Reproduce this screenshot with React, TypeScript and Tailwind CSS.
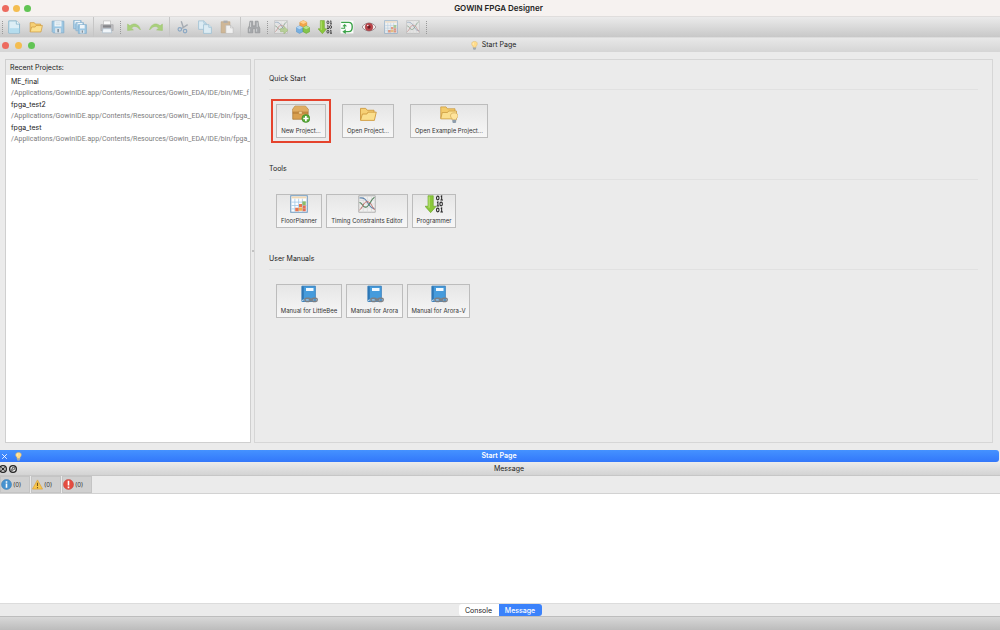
import { useState, type ReactNode } from "react";
import clsx from "clsx";

type IconProps = { className?: string };

function Svg({ className = "size-[14px]", children }: IconProps & { children: ReactNode }) {
  return (
    <svg viewBox="0 0 24 24" className={clsx("shrink-0", className)} fill="none" aria-hidden="true">
      {children}
    </svg>
  );
}

function NewFileIcon() {
  return (
    <Svg>
      <path d="M3 1.5h13l5.5 5.5v15.5H3z" fill="#dceef6" stroke="#86b5cc" strokeWidth="1.6" />
      <path d="M4 14h17v8H4z" fill="#b4dcee" />
      <path d="M16 1.5V7h5.5" fill="#f4fbfe" stroke="#86b5cc" strokeWidth="1.4" />
    </Svg>
  );
}

function FolderIcon({ className }: IconProps) {
  return (
    <Svg className={className}>
      <path d="M2 20V4.5h7l2 2.5h9v4" fill="#f6d075" stroke="#cf9a3d" strokeWidth="1.2" strokeLinejoin="round" />
      <path d="M2 20.5L4.5 12h6l1.5-2.5h11L20.5 20.5z" fill="#fbdf8d" stroke="#cf9a3d" strokeWidth="1.2" strokeLinejoin="round" />
    </Svg>
  );
}

function SaveIcon() {
  return (
    <Svg>
      <path d="M2 2h20v20H4l-2-2z" fill="#9cc7e3" stroke="#84aecb" strokeWidth="1.4" />
      <path d="M6 2h12v9H6z" fill="#eff5f9" />
      <path d="M8 5h8M8 8h8" stroke="#c3d2dc" strokeWidth="1.2" />
      <path d="M7 14h10v8H7z" fill="#dbe3e9" />
      <path d="M11 15.5h2.5V21H11z" fill="#7a8995" />
    </Svg>
  );
}

function SaveAllIcon() {
  return (
    <Svg>
      <g stroke="#84aecb" strokeWidth="1.2">
        <path d="M1 1h13v14H1z" fill="#a9cfe8" />
        <path d="M3 1.5h9v5H3z" fill="#eff5f9" stroke="none" />
        <path d="M5 4.5h13v14H5z" fill="#a9cfe8" />
        <path d="M8 5h8v5H8z" fill="#eff5f9" stroke="none" />
        <path d="M9 8h14v15H9z" fill="#9cc7e3" />
      </g>
      <path d="M12 8.5h8v6h-8z" fill="#eff5f9" />
      <path d="M12.5 17.5h7V23h-7z" fill="#dbe3e9" />
      <path d="M15 18h2v4h-2z" fill="#7a8995" />
    </Svg>
  );
}

function PrinterIcon() {
  return (
    <Svg>
      <path d="M6 1.5h12V9H6z" fill="#fafafa" stroke="#b3b3b3" />
      <path d="M1.5 8h21v10h-21z" fill="#bebec1" stroke="#a3a3a6" />
      <path d="M5 9h14v4H5z" fill="#85868a" />
      <path d="M5 15h14l1 7H4z" fill="#f1f6fa" stroke="#a4b9c8" />
    </Svg>
  );
}

function UndoIcon({ className }: IconProps) {
  return (
    <Svg className={className}>
      <path d="M1 7v11l10-1-3.5-3C11 9.5 17 10 23 17 21 7 12 3.5 5 10z" fill="#a9d07c" stroke="#97c266" strokeWidth=".8" />
    </Svg>
  );
}

function CutIcon() {
  return (
    <Svg>
      <path d="M9 2l4 12M20 8L9 15" stroke="#a6acb3" strokeWidth="2.4" />
      <circle cx="6.5" cy="16" r="3" stroke="#8aa7c3" strokeWidth="2" />
      <circle cx="15.5" cy="19" r="3" stroke="#8aa7c3" strokeWidth="2" />
    </Svg>
  );
}

function CopyIcon() {
  return (
    <Svg>
      <g fill="#dcebf3" stroke="#9bbed2" strokeWidth="1.3">
        <path d="M1 1.5h9l4 4V16H1z" />
        <path d="M10 1.5v4h4" />
        <path d="M9.5 8h9l4.5 4.5V23H9.500z" />
        <path d="M18.5 8v4.500H23" />
      </g>
    </Svg>
  );
}

function PasteIcon() {
  return (
    <Svg>
      <path d="M2 3h15v19H2z" fill="#cfb797" stroke="#bba27f" />
      <path d="M6 1h7v4H6z" fill="#adadad" />
      <path d="M10 9h8l4.5 4.5V23H10z" fill="#f1f1f1" stroke="#b9b9b9" />
      <path d="M18 9v4.5h4.5" stroke="#b9b9b9" />
    </Svg>
  );
}

function BinocularsIcon() {
  return (
    <Svg>
      <path d="M5 2h5v8h4V2h5l1 8 2 4v8h-8v-7h-4v7H2v-8l2-4z" fill="#a5a7aa" stroke="#8e9093" />
      <path d="M6 4v8M17.5 4v8M4.5 15v5M16.5 15v5" stroke="#d4d6d8" strokeWidth="1.5" />
    </Svg>
  );
}

function CurvesIcon({ className, run = false }: IconProps & { run?: boolean }) {
  return (
    <Svg className={className}>
      <path d="M1 1h22v22H1z" fill="#f0f0ef" stroke="#aaa" strokeWidth="1.2" />
      <path d="M1 7h22M1 12h22M1 17h22M7 1v22M12.5 1v22M18 1v22" stroke="#dadada" />
      <path d="M2 4c7-1 9 3 12 8s5 6 8 6" stroke="#5a81ab" strokeWidth="1.4" />
      <path d="M2 10c3 0 4 5 7 6 6 2 7-10 13-13" stroke="#51805c" strokeWidth="1.4" />
      <path d="M2 20c4-2 5-11 10-11s6 5 10 11" stroke="#bb6a64" strokeWidth="1.3" />
      {run && <path d="M11 15h6v-4l7 6.5-7 6.5v-4h-6z" fill="#a6ce72" stroke="#80aa4d" />}
    </Svg>
  );
}

function CubesIcon() {
  return (
    <Svg>
      <g strokeWidth=".8">
        <path d="M6.5 4L12.5 1l6 3v7l-6 3-6-3z" fill="#f1a54b" stroke="#d58832" />
        <path d="M6.5 4l6 3 6-3-6-3z" fill="#ffd08c" />
        <path d="M.5 13l5.5-3 6 3v7l-6 3-5.5-3z" fill="#78afe0" stroke="#538ec6" />
        <path d="M.5 13l5.5 3 6-3-6-3z" fill="#b4d6f4" />
        <path d="M12 13l5.5-3 6 3v7l-6 3-5.5-3z" fill="#85c44c" stroke="#609d2c" />
        <path d="M12 13l5.5 3 6-3-6-3z" fill="#b9e38d" />
      </g>
    </Svg>
  );
}

function ProgramIcon({ className }: IconProps) {
  return (
    <Svg className={className}>
      <path d="M4 1h7v14h4L7.5 23.5 0 15h4z" fill="#8bc83b" stroke="#679f24" strokeWidth=".8" />
      <path d="M5.5 2v15" stroke="#bce37c" strokeWidth="1.5" />
      <g stroke="#282828" strokeWidth="1.4">
        <ellipse cx="17" cy="4" rx="1.7" ry="2.5" />
        <path d="M21 2l1.2-.7v5.2M20.500 6.700H24" />
        <ellipse cx="21.5" cy="12" rx="1.7" ry="2.5" />
        <path d="M16 10l1.2-.7v5.2M15.500 14.600H19" />
        <ellipse cx="17" cy="20" rx="1.7" ry="2.5" />
        <path d="M21 18l1.2-.7v5.2M20.500 22.700H24" />
      </g>
    </Svg>
  );
}

function LoopIcon() {
  return (
    <Svg>
      <path d="M1 1h22v22H1z" fill="#fbfdfb" />
      <path d="M2 4h13c4 0 6 3 6 7.5S19 20 15 20H7" stroke="#3da34a" strokeWidth="2.400" />
      <path d="M10 16v8l-6-4z" fill="#3da34a" />
      <path d="M2 14h6V9M5 11l3-3 3 3" stroke="#3da34a" strokeWidth="1.800" />
    </Svg>
  );
}

function EyeIcon() {
  return (
    <Svg>
      <path d="M0 12c6-9 18-9 24 0-6 9-18 9-24 0z" fill="#f4eeee" stroke="#8d7c80" strokeWidth="1.4" />
      <circle cx="12" cy="12" r="6.5" fill="#bf4448" stroke="#98393f" />
      <circle cx="12" cy="12" r="2.8" fill="#6b1d25" />
      <circle cx="10" cy="9.5" r="1.3" fill="#fff" />
    </Svg>
  );
}

function FloorplanIcon({ className }: IconProps) {
  return (
    <Svg className={className}>
      <path d="M1 1h22v22H1z" fill="#fbfdff" stroke="#6f99bf" strokeWidth="1.4" />
      <path d="M2 2h20v2.5H2z" fill="#f2d9b4" />
      <path d="M2 9.5h20M2 14h20M2 18.5h20M6.5 5v17M11.5 5v17M16.5 5v17" stroke="#9fc7e5" />
      <path d="M16.5 8.5h4.5v5h-4.5z" fill="#8dbc67" />
      <path d="M12 12h4v4h-4zM7 17h4.5v4.5H7z" fill="#e8754f" />
      <path d="M12 16.5h4.5V21H12z" fill="#f3b04d" />
      <path d="M17 14h4v3.5h-4zM17 18h4v3.5h-4z" fill="#e36e55" />
    </Svg>
  );
}

function BulbIcon({ className }: IconProps) {
  return (
    <Svg className={className}>
      <path d="M12 1C3 1 3 10 8 14v4h8v-4c5-4 5-13-4-13z" fill="#ffdc8b" stroke="#e3bd70" strokeWidth="1.5" />
      <path d="M10 5c-2 1-2 3-1 5" stroke="#fff7dc" strokeWidth="2" />
      <path d="M8 17h8v4l-2 2h-4l-2-2z" fill="#a1aab0" />
    </Svg>
  );
}

function NewProjectIcon() {
  return (
    <Svg className="size-[18px]">
      <path d="M4 1.5h14l3.5 4V19H1V5.500z" fill="#d9a050" stroke="#aa7935" />
      <path d="M1 6l3-4.5h14L21.5 6v3H1z" fill="#e0ad62" />
      <path d="M1 9.5h20.5M1 11h20.5" stroke="#a8702d" strokeWidth=".8" />
      <path d="M9 8.5h4.5V12H9z" fill="#f2d296" stroke="#a8702d" strokeWidth=".5" />
      <circle cx="18.5" cy="18" r="5.3" fill="#58aa37" stroke="#3d8627" strokeWidth=".8" />
      <path d="M18.5 14.5v7M15 18h7" stroke="#fff" strokeWidth="2.3" />
    </Svg>
  );
}

function ExampleIcon() {
  return (
    <Svg className="size-[18px]">
      <path d="M1 18V2.5h7L10 5h10v4" fill="#f3cb6b" stroke="#c9983d" />
      <path d="M1 18.5L3 10h7l1.5-2H22v10.5z" fill="#fbdf8d" stroke="#c9983d" />
      <path d="M19 10.5c-6 0-6 5-3 7.5v2h6v-2c3-2.5 3-7.5-3-7.5z" fill="#ffe49c" stroke="#ca9f50" strokeWidth=".8" />
      <path d="M16.5 19.5h5V23l-1 1h-3l-1-1z" fill="#8f9dac" />
    </Svg>
  );
}

function ManualIcon() {
  return (
    <Svg className="size-[18px]">
      <path d="M2.5 1.5h18V22h-18z" fill="#459bdc" stroke="#2d76b5" />
      <path d="M2.5 2H5v20H2.500z" fill="#2d76b5" />
      <path d="M8 4h10v4H8z" fill="#eff8ff" />
      <path d="M2.5 22l1-2h15" stroke="#d6e3ec" strokeWidth="1.2" />
      <g stroke="#7b8086" strokeWidth="2">
        <rect x="6.5" y="17.5" width="7.500" height="4.500" rx="2.200" />
        <rect x="15.5" y="17.5" width="7.500" height="4.500" rx="2.200" />
        <path d="M11.500 19.700h6.500" />
      </g>
    </Svg>
  );
}

function InfoIcon() {
  return (
    <Svg className="size-[11px]">
      <circle cx="12" cy="12" r="11" fill="#4692cf" stroke="#3677ad" />
      <path d="M12 10v9M12 5v3" stroke="#fff" strokeWidth="3.5" />
    </Svg>
  );
}

function WarningIcon() {
  return (
    <Svg className="size-[11px]">
      <path d="M12 2l11 20H1z" fill="#f7c64c" stroke="#dda136" strokeWidth="1.5" strokeLinejoin="round" />
      <path d="M12 8v7M12 17.5v2.5" stroke="#76561d" strokeWidth="2.4" />
    </Svg>
  );
}

function ErrorIcon() {
  return (
    <Svg className="size-[11px]">
      <circle cx="12" cy="12" r="11" fill="#e54c40" stroke="#c23a31" />
      <path d="M12 4v10M12 16.5v3.5" stroke="#fff" strokeWidth="3.5" />
    </Svg>
  );
}

const TOOLBAR: { label: string; icon: ReactNode; dim?: boolean }[][] = [
  [
    { label: "New File", icon: <NewFileIcon /> },
    { label: "Open", icon: <FolderIcon /> },
    { label: "Save", icon: <SaveIcon /> },
    { label: "Save All", icon: <SaveAllIcon /> },
  ],
  [{ label: "Print", icon: <PrinterIcon /> }],
  [
    { label: "Undo", icon: <UndoIcon /> },
    { label: "Redo", icon: <UndoIcon className="size-[14px] -scale-x-100" /> },
  ],
  [
    { label: "Cut", icon: <CutIcon /> },
    { label: "Copy", icon: <CopyIcon /> },
    { label: "Paste", icon: <PasteIcon /> },
  ],
  [{ label: "Find", icon: <BinocularsIcon /> }],
  [
    { label: "Run Constraints", icon: <CurvesIcon run />, dim: true },
    { label: "IP Core Generator", icon: <CubesIcon /> },
    { label: "Programmer", icon: <ProgramIcon /> },
    { label: "Schematic Viewer", icon: <LoopIcon /> },
    { label: "Analyzer", icon: <EyeIcon /> },
    { label: "FloorPlanner", icon: <FloorplanIcon />, dim: true },
    { label: "Timing Constraints", icon: <CurvesIcon />, dim: true },
  ],
];

// what follows each toolbar group
const DIVIDERS = ["line", "grip", "line", "line", "grip", "grip"];

const PROJECTS = [
  { name: "ME_final", path: "/Applications/GowinIDE.app/Contents/Resources/Gowin_EDA/IDE/bin/ME_f" },
  { name: "fpga_test2", path: "/Applications/GowinIDE.app/Contents/Resources/Gowin_EDA/IDE/bin/fpga_" },
  { name: "fpga_test", path: "/Applications/GowinIDE.app/Contents/Resources/Gowin_EDA/IDE/bin/fpga_" },
];

const SECTIONS = [
  {
    title: "Quick Start",
    gap: "gap-4",
    items: [
      { label: "New Project...", icon: <NewProjectIcon />, width: "w-[50px]", marked: true },
      { label: "Open Project...", icon: <FolderIcon className="size-[18px]" />, width: "w-[52px]" },
      { label: "Open Example Project...", icon: <ExampleIcon />, width: "w-[78px]" },
    ],
  },
  {
    title: "Tools",
    gap: "gap-1",
    items: [
      { label: "FloorPlanner", icon: <FloorplanIcon className="size-[18px]" />, width: "w-[46px]" },
      { label: "Timing Constraints Editor", icon: <CurvesIcon className="size-[18px]" />, width: "w-[82px]" },
      { label: "Programmer", icon: <ProgramIcon className="size-[18px]" />, width: "w-[44px]" },
    ],
  },
  {
    title: "User Manuals",
    gap: "gap-1",
    items: [
      { label: "Manual for LittleBee", icon: <ManualIcon />, width: "w-[66px]" },
      { label: "Manual for Arora", icon: <ManualIcon />, width: "w-[57px]" },
      { label: "Manual for Arora-V", icon: <ManualIcon />, width: "w-[63px]" },
    ],
  },
];

const FILTERS = [
  { label: "Info", icon: <InfoIcon /> },
  { label: "Warnings", icon: <WarningIcon /> },
  { label: "Errors", icon: <ErrorIcon /> },
];

const TABS = [
  { name: "Console", width: "w-[40px]" },
  { name: "Message", width: "w-[43px]" },
];

function TrafficLights({ gap }: { gap: string }) {
  return (
    <div className={clsx("absolute left-[2px] flex", gap)}>
      <button aria-label="Close" className="size-[7px] rounded-full bg-[#ed6a5e]" />
      <button aria-label="Minimize" className="size-[7px] rounded-full bg-[#f4bd50]" />
      <button aria-label="Zoom" className="size-[7px] rounded-full bg-[#61c454]" />
    </div>
  );
}

function Divider({ kind }: { kind: string }) {
  return (
    <span className="flex w-[5px] shrink-0 justify-center">
      {kind === "line" ? (
        <span className="h-[20px] w-px bg-[#c6c6c6]" />
      ) : (
        <span className="h-[13px] border-l border-dotted border-[#999]" />
      )}
    </span>
  );
}

function Toolbar() {
  return (
    <div
      role="toolbar"
      className="flex h-[21px] shrink-0 items-center border-t border-[#e0dedd] bg-linear-to-b from-[#ebebeb] to-[#c8c8c8]"
    >
      <span className="flex w-[3px] justify-end">
        <span className="h-[13px] border-l border-dotted border-[#999]" />
      </span>
      {TOOLBAR.map((group, i) => (
        <div key={i} className="flex items-center">
          {group.map((t) => (
            <button
              key={t.label}
              aria-label={t.label}
              className={clsx("flex h-[18px] w-[22px] items-center justify-center", t.dim && "opacity-60")}
            >
              {t.icon}
            </button>
          ))}
          <Divider kind={DIVIDERS[i]} />
        </div>
      ))}
    </div>
  );
}

function RecentProjects() {
  return (
    <aside className="flex w-[246px] shrink-0 flex-col border border-[#cfcfcf] bg-white">
      <h2 className="h-[15px] shrink-0 bg-[#ebebeb] pl-[4px] text-[7px] leading-[15px]">Recent Projects:</h2>
      <ul className="overflow-hidden pt-px pl-[5px]">
        {PROJECTS.map((p) => (
          <li key={p.name}>
            <a href="#" className="block whitespace-nowrap">
              <span className="block text-[7px] leading-[12px]">{p.name}</span>
              <span className="block font-['Roboto','Liberation_Sans',sans-serif] text-[7px] leading-[11px] text-[#7c7c7c]">
                {p.path}
              </span>
            </a>
          </li>
        ))}
      </ul>
    </aside>
  );
}

function StartPanel() {
  return (
    <main className="min-w-0 flex-1 border border-[#d6d6d6] px-[14px] pt-[13px]">
      {SECTIONS.map((s) => (
        <section key={s.title} className="h-[90px]">
          <h2 className="h-[17px] border-b border-[#e1e1e1] text-[7px] leading-[12px]">{s.title}</h2>
          <div className={clsx("flex pt-[14px] pl-[7px]", s.gap)}>
            {s.items.map((it) => (
              <div key={it.label} className="relative">
                <button
                  className={clsx(
                    "flex h-[34px] flex-col items-center gap-[4px] border border-[#bcbcbc] bg-linear-to-b from-[#e6e6e6] to-[#f7f7f7]",
                    it.width,
                  )}
                >
                  {it.icon}
                  <span className="text-[6px] leading-[8px] whitespace-nowrap text-[#333]">{it.label}</span>
                </button>
                {"marked" in it && (
                  <span className="pointer-events-none absolute -inset-[5px] border-2 border-[#e5432d]" />
                )}
              </div>
            ))}
          </div>
        </section>
      ))}
    </main>
  );
}

export default function App() {
  const [tab, setTab] = useState("Message");

  return (
    <div className="flex min-h-screen flex-col bg-[#ebebeb] font-['Inter','Liberation_Sans',sans-serif] text-[#222]">
      <header className="relative flex h-[16px] shrink-0 items-center justify-center bg-[#f6f2f0] pr-[3px]">
        <TrafficLights gap="gap-[4px]" />
        <h1 className="text-[8px] leading-[12px] font-semibold">GOWIN FPGA Designer</h1>
      </header>

      <Toolbar />

      <div className="relative flex h-[15px] shrink-0 items-center justify-center gap-[3px] border-t border-[#dcdcdc] bg-linear-to-b from-[#e8e8e8] to-[#d5d5d5] pr-[14px]">
        <TrafficLights gap="gap-[6px]" />
        <BulbIcon className="size-[9px]" />
        <span className="text-[7px] leading-[12px]">Start Page</span>
      </div>

      <div className="flex flex-1 pt-[7px] pr-[7px] pb-[7px] pl-[5px]">
        <RecentProjects />
        <div className="flex w-[3px] shrink-0 items-center justify-center">
          <span className="size-[2px] rounded-full bg-[#b5b5b5]" />
        </div>
        <StartPanel />
      </div>

      <div className="mr-px flex h-[12px] shrink-0 items-center rounded-r-[3px] bg-linear-to-b from-[#4592ff] to-[#3377fa] text-white">
        <button aria-label="Close Start Page" className="flex w-[9px] justify-center">
          <Svg className="size-[7px]">
            <path d="M4 4l16 16M20 4L4 20" stroke="#fff" strokeWidth="3" />
          </Svg>
        </button>
        <BulbIcon className="ml-[5px] size-[9px]" />
        <span className="flex-1 pr-[24px] text-center text-[7px] leading-[14px] font-semibold">Start Page</span>
      </div>

      <div className="mt-px flex h-[13px] shrink-0 items-center border-b border-[#c6c6c6] bg-linear-to-b from-[#e9e9e9] to-[#d3d3d3]">
        <div className="flex w-[18px] gap-[2px]">
          <button aria-label="Close message panel">
            <Svg className="-ml-px size-[8px]">
              <circle cx="12" cy="12" r="10" fill="#f1f1f1" stroke="#222" strokeWidth="4" />
              <path d="M7 7l10 10M17 7L7 17" stroke="#222" strokeWidth="3.5" />
            </Svg>
          </button>
          <button aria-label="Float message panel">
            <Svg className="size-[8px]">
              <circle cx="12" cy="12" r="10" fill="#f1f1f1" stroke="#222" strokeWidth="4" />
              <path d="M10 7h7v6h-7zM7 11v6h6" stroke="#222" strokeWidth="2" />
            </Svg>
          </button>
        </div>
        <h2 className="flex-1 text-center text-[7px] leading-[14px]">Message</h2>
      </div>

      <div className="flex h-[18px] shrink-0 gap-px border-b border-[#d2d2d2]">
        {FILTERS.map((f) => (
          <button
            key={f.label}
            aria-label={f.label}
            className="flex h-[17px] w-[30px] items-center gap-px border border-[#c4c4c4] bg-[#d0d0d0] text-[6px] text-[#333]"
          >
            {f.icon}
            <span>(0)</span>
          </button>
        ))}
      </div>

      <div className="h-[109px] shrink-0 bg-white" />

      <div role="tablist" className="flex h-[13px] shrink-0 items-end justify-center border-t border-[#dcdcdc]">
        {TABS.map((t) => (
          <button
            key={t.name}
            role="tab"
            aria-selected={tab === t.name}
            onClick={() => setTab(t.name)}
            className={clsx(
              "h-[12px] text-[7px] leading-[14px] first:rounded-l-[3px] last:rounded-r-[3px]",
              t.width,
              tab === t.name ? "bg-[#3b82fb] font-medium text-white" : "bg-white",
            )}
          >
            {t.name}
          </button>
        ))}
      </div>
      <footer className="h-[14px] shrink-0 border-t border-[#bdbdbd] bg-linear-to-b from-[#d8d8d8] to-[#bcbcbc]" />
    </div>
  );
}
